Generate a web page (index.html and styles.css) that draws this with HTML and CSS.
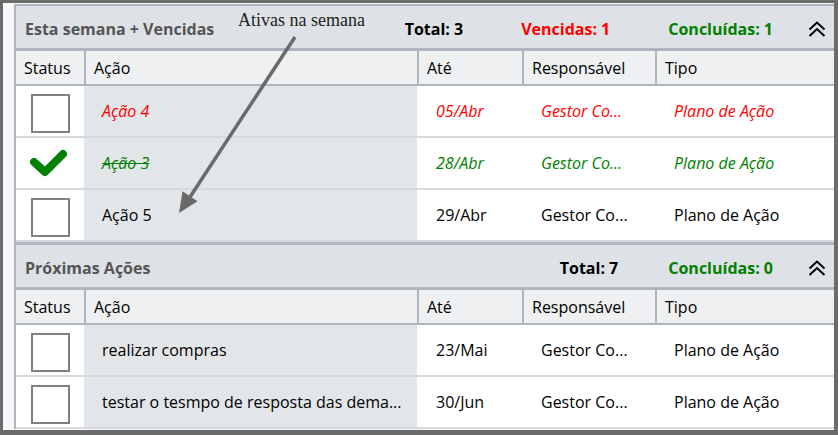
FILE: index.html
```html
<!DOCTYPE html>
<html lang="pt">
<head>
<meta charset="utf-8">
<title>Ações</title>
<link rel="stylesheet" href="styles.css">
</head>
<body>
<div class="frame">
  <div class="panel">
    <section class="section">
      <header class="sec-head">
        <span class="sec-title">Esta semana + Vencidas</span>
        <span class="stats">
          <span class="stat">Total: 3</span>
          <span class="stat red venc">Vencidas: 1</span>
          <span class="stat green">Concluídas: 1</span>
        </span>
        <svg class="chev" width="18" height="16" viewBox="0 0 18 16"><path d="M1.5 8.5 L9 1.5 L16.5 8.5 M1.5 15 L9 8 L16.5 15" fill="none" stroke="#000" stroke-width="2"/></svg>
      </header>
      <div class="grid colhead">
        <div class="hc">Status</div>
        <div class="hc sep">Ação</div>
        <div class="hc sep">Até</div>
        <div class="hc sep">Responsável</div>
        <div class="hc sep">Tipo</div>
      </div>
      <div class="grid row red it">
        <div class="c st"><span class="box"></span></div>
        <div class="c act">Ação 4</div>
        <div class="c">05/Abr</div>
        <div class="c">Gestor Co...</div>
        <div class="c">Plano de Ação</div>
      </div>
      <div class="grid row green it">
        <div class="c st"><svg class="check" width="40" height="32" viewBox="0 0 40 32"><polyline points="5,15 16,25 34,7" fill="none" stroke="#008000" stroke-width="8" stroke-linecap="round" stroke-linejoin="round"/></svg></div>
        <div class="c act"><s>Ação 3</s></div>
        <div class="c">28/Abr</div>
        <div class="c">Gestor Co...</div>
        <div class="c">Plano de Ação</div>
      </div>
      <div class="grid row">
        <div class="c st"><span class="box"></span></div>
        <div class="c act">Ação 5</div>
        <div class="c">29/Abr</div>
        <div class="c">Gestor Co...</div>
        <div class="c">Plano de Ação</div>
      </div>
    </section>
    <section class="section second">
      <header class="sec-head">
        <span class="sec-title">Próximas Ações</span>
        <span class="stats">
          <span class="stat">Total: 7</span>
          <span class="stat green">Concluídas: 0</span>
        </span>
        <svg class="chev" width="18" height="16" viewBox="0 0 18 16"><path d="M1.5 8.5 L9 1.5 L16.5 8.5 M1.5 15 L9 8 L16.5 15" fill="none" stroke="#000" stroke-width="2"/></svg>
      </header>
      <div class="grid colhead">
        <div class="hc">Status</div>
        <div class="hc sep">Ação</div>
        <div class="hc sep">Até</div>
        <div class="hc sep">Responsável</div>
        <div class="hc sep">Tipo</div>
      </div>
      <div class="grid row">
        <div class="c st"><span class="box"></span></div>
        <div class="c act">realizar compras</div>
        <div class="c">23/Mai</div>
        <div class="c">Gestor Co...</div>
        <div class="c">Plano de Ação</div>
      </div>
      <div class="grid row">
        <div class="c st"><span class="box"></span></div>
        <div class="c act">testar o tesmpo de resposta das dema...</div>
        <div class="c">30/Jun</div>
        <div class="c">Gestor Co...</div>
        <div class="c">Plano de Ação</div>
      </div>
    </section>
  </div>
</div>
<div class="note">
  <svg width="838" height="435" viewBox="0 0 838 435">
    <line x1="295" y1="37" x2="190" y2="197" stroke="#6a6a6a" stroke-width="3.5"/>
    <polygon points="179,213 182.5,191.3 197.5,201.3" fill="#6a6a6a"/>
  </svg>
  <span class="note-text">Ativas na semana</span>
</div>
</body>
</html>
```
FILE: styles.css
```css
* { box-sizing: border-box; }
html, body { margin: 0; padding: 0; }
body {
  background: #6b6b6b;
  width: 838px;
  height: 435px;
  overflow: hidden;
  position: relative;
  font-family: "Open Sans", "Noto Sans", sans-serif;
  font-size: 16px;
  color: #000;
}
.frame {
  margin: 3px 4px 0 3px;
  height: 427px;
  background: #f7f8f9;
  padding: 1px 0 0 11px;
  overflow: hidden;
}
.panel {
  border-left: 2px solid #aeb5bc;
  border-top: 2px solid #aeb5bc;
}
.second { border-top: 3px solid #aeb5bc; }
.sec-head {
  height: 39px;
  background: #dee2e6;
  border-bottom: 3px solid #aeb5bc;
  display: flex;
  align-items: center;
  padding: 3px 8px 0 9px;
  font-weight: 700;
  box-sizing: content-box;
}
.sec-title { color: #555; }
.stats { margin-left: auto; display: flex; }
.stat + .stat { margin-left: 50px; }
.venc { margin-left: 58px !important; margin-right: 8px; }
.chev { margin-left: 35px; }
.red { color: #ff0000; }
.green { color: #008000; }
.it { font-style: italic; }
.grid {
  display: grid;
  grid-template-columns: 68px 333px 105px 133px 1fr;
}
.colhead {
  height: 35px;
  background: #eef0f2;
  border-bottom: 2px solid #aeb5bc;
}
.hc {
  display: flex;
  align-items: center;
  padding-left: 8px;
}
.hc.sep { border-left: 2px solid #aeb5bc; padding-left: 8px; }
.row {
  height: 52px;
  background: #fff;
  border-bottom: 2px solid #d6dadf;
}
.c {
  display: flex;
  align-items: center;
  padding-left: 19px;
  white-space: nowrap;
  overflow: hidden;
}
.c.act { background: #e3e6e9; padding-left: 18px; }
.c.st { padding-left: 0; justify-content: center; }
.box {
  width: 39px;
  height: 39px;
  border: 2px solid #808080;
  background: #fff;
  margin-top: 4px;
}
.check { margin-left: -2px; }
s { text-decoration: line-through; }
.note {
  position: absolute;
  left: 0;
  top: 0;
  width: 838px;
  height: 435px;
  pointer-events: none;
}
.note svg { position: absolute; left: 0; top: 0; }
.note-text {
  position: absolute;
  left: 238px;
  top: 10px;
  font-family: "Liberation Serif", serif;
  font-size: 18px;
  color: #222;
}
```
